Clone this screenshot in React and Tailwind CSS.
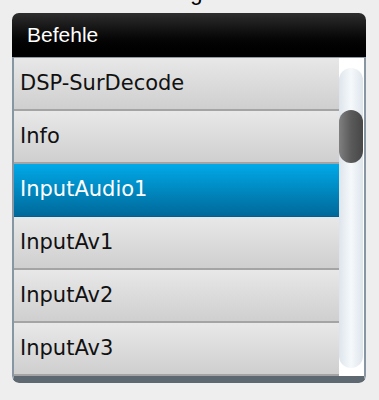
import React from "react";

const items = ["DSP-SurDecode", "Info", "InputAudio1", "InputAv1", "InputAv2", "InputAv3"];

export default function App() {
  return (
    <div className="w-[379px] h-[400px] bg-[#eeeeee] overflow-hidden relative">
      <div className="h-[13px] overflow-hidden relative">
        <div
          className="absolute left-[178px] top-[-20px] text-[22px] leading-[26px] text-black"
          style={{ fontFamily: "'Liberation Sans', Arial, sans-serif" }}
        >
          ng
        </div>
      </div>
      <div className="ml-[12px] w-[354px] rounded-[7px] overflow-hidden">
        <div
          className="h-[44px] flex items-center pl-[15px] text-white text-[21px] bg-gradient-to-b from-[#2e2e2e] to-[#000000]"
          style={{ fontFamily: "'Liberation Sans', Arial, sans-serif" }}
        >
          Befehle
        </div>
        <div className="flex border-t border-[#8e9ba5] border-x-2 border-x-[#8796a2] border-b-[7px] border-b-[#5e6871] rounded-b-[7px] bg-white">
          <div className="w-[325px] flex flex-col">
            {items.map((t, i) => {
              const sel = t === "InputAudio1";
              return (
                <div
                  key={t}
                  className={
                    sel
                      ? "h-[53px] flex items-center pl-[6px] text-white text-[21px] bg-gradient-to-b from-[#00aae9] to-[#00699a] border-b border-b-[#006090]"
                      : "h-[53px] flex items-center pl-[6px] text-[#111111] text-[21px] bg-gradient-to-b from-[#e8e8e8] to-[#cfcfcf] border-b-2 border-b-[#a4a4a4]"
                  }
                  style={{ fontFamily: "'DejaVu Sans', Verdana, sans-serif" }}
                >
                  {t}
                </div>
              );
            })}
          </div>
          <div className="w-[25px] bg-white pt-[10px] pb-[8px] pr-[1px]">
            <div className="h-full w-[24px] rounded-full bg-gradient-to-r from-[#dde5ec] via-[#f6f9fb] to-[#dde5ec] pt-[42px]">
              <div className="h-[53px] w-[24px] rounded-full bg-gradient-to-r from-[#808080] via-[#5a5a5a] to-[#474747]" />
            </div>
          </div>
        </div>
      </div>
    </div>
  );
}
